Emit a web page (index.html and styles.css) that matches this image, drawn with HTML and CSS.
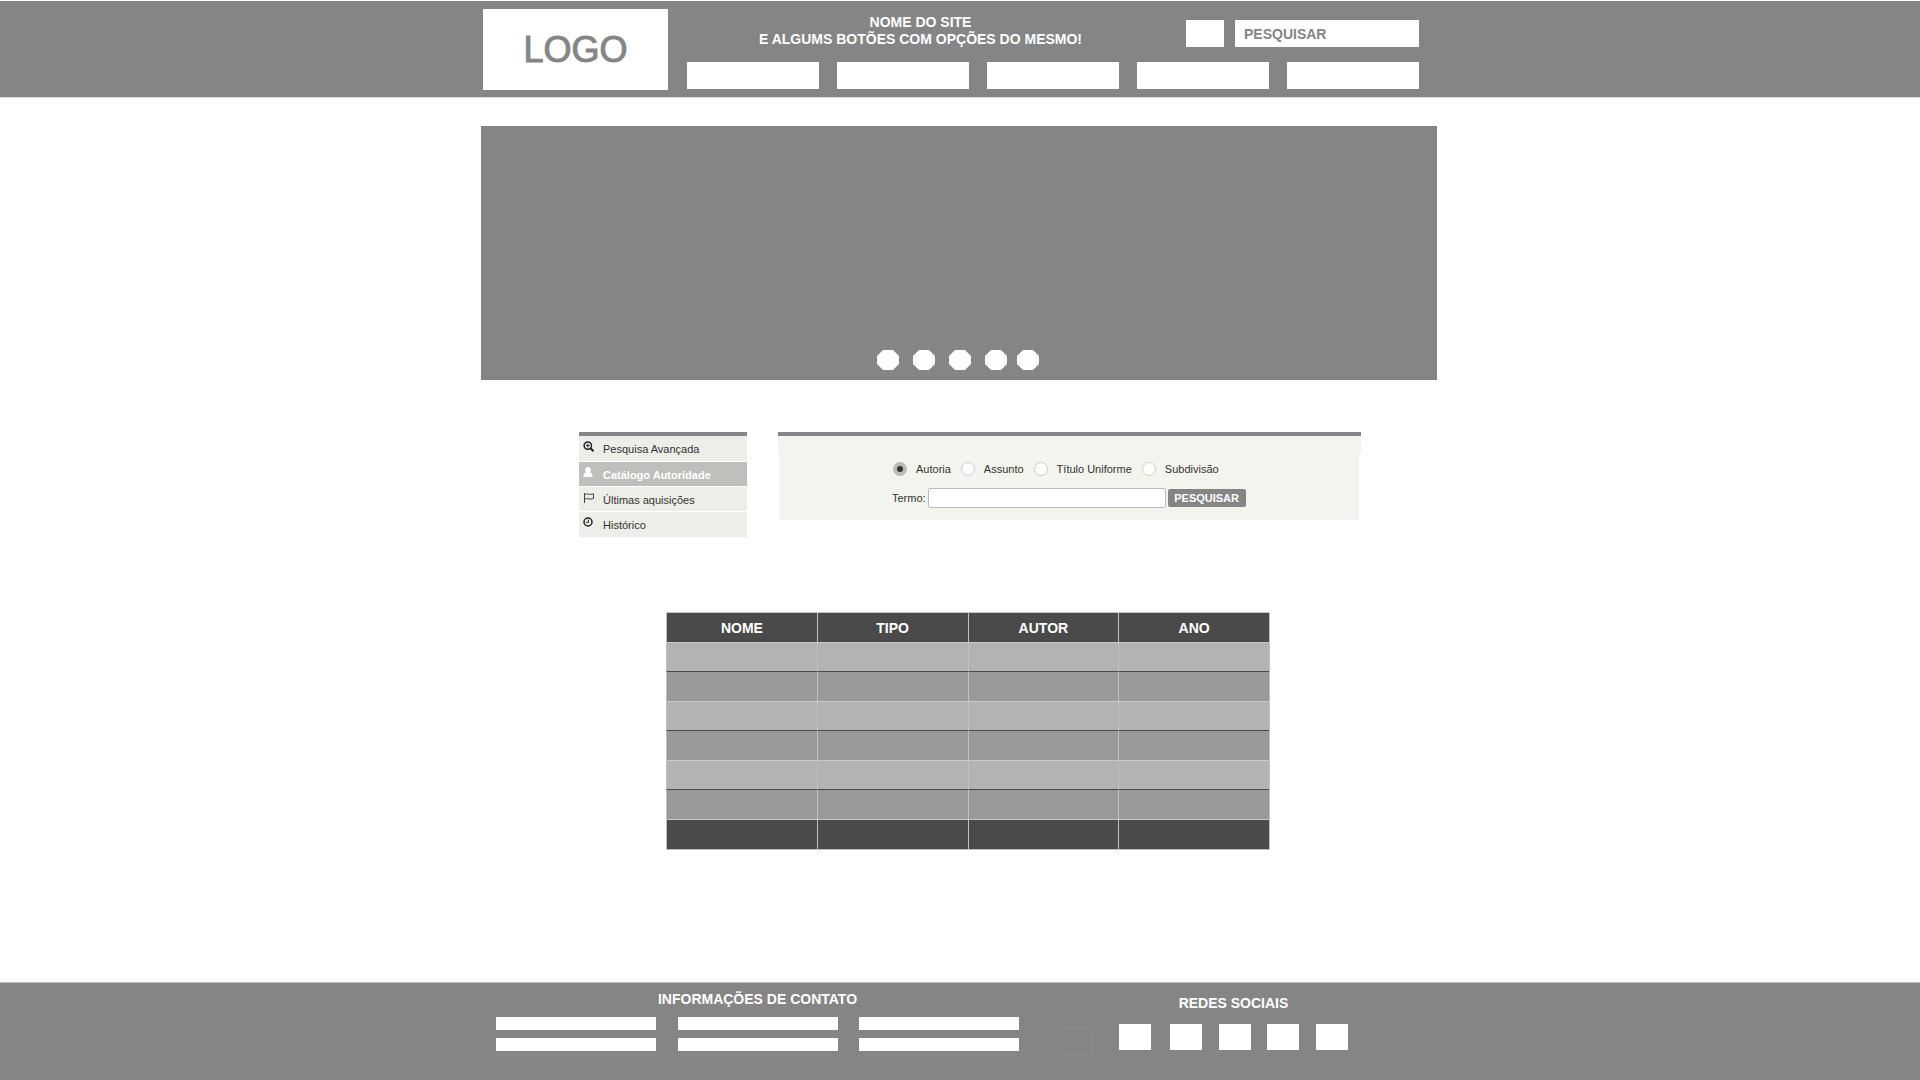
FILE: index.html
```html
<!DOCTYPE html>
<html lang="pt-BR">
<head>
<meta charset="utf-8">
<title>Nome do site</title>
<link rel="stylesheet" href="styles.css">
</head>
<body>
<header class="site-header">
  <div class="container header-inner">
    <a class="logo" href="#">LOGO</a>
    <div class="header-main">
      <div class="header-top">
        <h1 class="site-title">NOME DO SITE<br>E ALGUMS BOTÕES COM OPÇÕES DO MESMO!</h1>
        <form class="site-search">
          <button class="search-button" type="button" aria-label="Buscar"></button>
          <input class="search-input" type="text" placeholder="PESQUISAR" aria-label="Pesquisar">
        </form>
      </div>
      <nav class="main-nav">
        <button type="button" aria-label="Opção 1"></button>
        <button type="button" aria-label="Opção 2"></button>
        <button type="button" aria-label="Opção 3"></button>
        <button type="button" aria-label="Opção 4"></button>
        <button type="button" aria-label="Opção 5"></button>
      </nav>
    </div>
  </div>
</header>

<main class="container">
  <section class="banner">
    <div class="dots">
      <button type="button" aria-label="Slide 1"></button>
      <button type="button" aria-label="Slide 2"></button>
      <button type="button" aria-label="Slide 3"></button>
      <button type="button" aria-label="Slide 4"></button>
      <button type="button" aria-label="Slide 5"></button>
    </div>
  </section>

  <section class="catalog">
    <nav class="side-menu">
      <a href="#">
        <svg viewBox="0 0 12 12"><circle cx="4.800" cy="4.600" r="3.700" fill="none" stroke="#222" stroke-width="1.500"/><path d="M7.500 7.300 10.500 10.300" stroke="#222" stroke-width="2"/><path d="M3 4.600h3.600M4.800 2.800v3.600" stroke="#222"/></svg>
        Pesquisa Avançada</a>
      <a class="active" href="#">
        <svg viewBox="0 0 12 12"><path d="M5 0C6.700 0 7.800 1.200 7.800 2.900c0 1-.3 1.800-.9 2.400C8.700 5.600 9.500 7 9.500 9c0 .7-.4 1-1 1h-7c-.6 0-1-.3-1-1 0-2 .8-3.400 2.600-3.700-.6-.6-.9-1.400-.9-2.400C2.200 1.200 3.300 0 5 0Z" fill="#fff"/></svg>
        Catálogo Autoridade</a>
      <a href="#">
        <svg viewBox="0 0 12 12"><path d="M1.500 1v10M1.500 2.500C4 .8 6 3.500 10.500 1.800v4.700C6 8.200 4 5.500 1.500 7.200" fill="none" stroke="#444"/></svg>
        Últimas aquisições</a>
      <a href="#">
        <svg viewBox="0 0 12 12"><circle cx="5" cy="5" r="4" fill="none" stroke="#222" stroke-width="1.500"/><path d="M5.400 2.600v2.800H3.200" fill="none" stroke="#222"/></svg>
        Histórico</a>
    </nav>

    <form class="search-panel">
      <div class="panel-head"></div>
      <div class="panel-body">
        <div class="options">
          <label><input type="radio" name="campo" checked>Autoria</label>
          <label><input type="radio" name="campo">Assunto</label>
          <label><input type="radio" name="campo">Título Uniforme</label>
          <label><input type="radio" name="campo">Subdivisão</label>
        </div>
        <div class="term">
          <label for="termo">Termo:</label>
          <input id="termo" type="text">
          <button type="button">PESQUISAR</button>
        </div>
      </div>
    </form>
  </section>

  <table class="results">
    <thead><tr><th>NOME</th><th>TIPO</th><th>AUTOR</th><th>ANO</th></tr></thead>
    <tbody>
      <tr><td></td><td></td><td></td><td></td></tr>
      <tr><td></td><td></td><td></td><td></td></tr>
      <tr><td></td><td></td><td></td><td></td></tr>
      <tr><td></td><td></td><td></td><td></td></tr>
      <tr><td></td><td></td><td></td><td></td></tr>
      <tr><td></td><td></td><td></td><td></td></tr>
    </tbody>
    <tfoot><tr><td></td><td></td><td></td><td></td></tr></tfoot>
  </table>
</main>

<footer class="site-footer">
  <div class="container footer-inner">
    <section class="contact">
      <h2>INFORMAÇÕES DE CONTATO</h2>
      <ul><li></li><li></li><li></li><li></li><li></li><li></li></ul>
    </section>
    <div class="ghost"></div>
    <section class="social">
      <h2>REDES SOCIAIS</h2>
      <div class="social-links">
        <a href="#" aria-label="Rede 1"></a>
        <a href="#" aria-label="Rede 2"></a>
        <a href="#" aria-label="Rede 3"></a>
        <a href="#" aria-label="Rede 4"></a>
        <a href="#" aria-label="Rede 5"></a>
      </div>
    </section>
  </div>
</footer>
</body>
</html>
```
FILE: styles.css
```css
* { box-sizing: border-box; }

body {
  margin: 0;
  min-height: 100vh;
  display: flex;
  flex-direction: column;
  background: #fff;
  color: #333;
  font-family: "Liberation Sans", Arial, sans-serif;
  font-size: 11px;
}

button, input { font: inherit; margin: 0; border: 0; padding: 0; border-radius: 0; }
h1, h2 { margin: 0; font-size: 14px; font-weight: 700; line-height: 17px; color: #fff; text-align: center; }

.container { width: 100%; max-width: 958px; margin: 0 auto; padding-right: 2px; }

/* Header */
.site-header { margin-top: 1px; background: #858585; border-bottom: 1px solid #ddd; }
.header-inner { display: flex; gap: 19px; padding: 8px 20px 7px 2px; }
.logo {
  width: 185px; height: 81px;
  display: flex; align-items: center; justify-content: center;
  background: #fff; color: #858585;
  font-size: 36px; text-decoration: none;
  -webkit-text-stroke: 1px #858585;
}
.header-main { flex: 1; display: flex; flex-direction: column; justify-content: space-between; }
.header-top { display: flex; justify-content: space-between; }
.site-title { flex: 1; padding: 5px 32px 0 0; }
.site-search { display: flex; gap: 11px; padding-top: 11px; }
.search-button { width: 38px; height: 27px; background: #fff; }
.search-input { width: 184px; height: 27px; padding: 0 9px; background: #fff; font-size: 14px; font-weight: 700; color: #858585; }
.search-input::placeholder { color: #858585; opacity: 1; }
.main-nav { display: grid; grid-template-columns: repeat(5, 1fr); gap: 18px; padding-bottom: 1px; }
.main-nav button { height: 27px; background: #fff; }

/* Banner */
.banner { margin-top: 28px; height: 254px; display: flex; align-items: flex-end; justify-content: center; padding-bottom: 10px; background: #858585; }
.dots { display: grid; grid-template-columns: repeat(3, 36px) 32px 22px; padding-right: 2px; }
.dots button {
  width: 22px; height: 20px; background: #fff;
  clip-path: polygon(6px 0, 16px 0, 22px 6px, 22px 14px, 16px 20px, 6px 20px, 0 14px, 0 6px);
}

/* Catalogue search */
.catalog { max-width: 782px; margin: 52px 0 0 98px; display: flex; align-items: flex-start; gap: 31px; }
.side-menu { width: 168px; display: flex; flex-direction: column; gap: 1px; border-top: 4px solid #858585; }
.side-menu a { display: flex; gap: 8px; height: 24px; padding: 5px 4px; line-height: 16px; background: #edeee8; color: #333; text-decoration: none; }
.side-menu a:first-child, .side-menu a:last-child { height: 25px; }
.side-menu .active { background: #bfc0bc; color: #fff; font-weight: 700; }
.side-menu svg { width: 12px; height: 12px; flex: none; }
.search-panel { flex: 1; border-top: 4px solid #858585; }
.panel-head { height: 17px; background: #f3f4ee; }
.panel-body { margin: 0 2px 0 1px; background: #f3f4ee; padding: 9px 0 12px 113px; }
.options, .options label, .term { display: flex; align-items: center; }
.options { gap: 10px; padding-left: 1px; }
.options label { gap: 9px; line-height: 14px; }
.options input { appearance: none; width: 14px; height: 14px; border: 1px solid #ccc; border-radius: 50%; background: #fff; }
.options input:checked { border: 4px solid #bbb; background: #333; }
.term { margin-top: 12px; gap: 2px; }
.term input { width: 238px; height: 20px; border: 1px solid #bbb; border-radius: 2px; background: #fff; }
.term button { width: 78px; height: 18px; border-radius: 2px; background: #858585; color: #fff; font-weight: 700; }

/* Results */
.results { width: 604px; margin: 75px 0 0 185px; border-spacing: 0; table-layout: fixed; border-right: 1px solid #c0c0c0; border-bottom: 1px solid #c0c0c0; }
.results th, .results td { height: 30px; padding: 0; border-top: 1px solid #c8c8c8; border-left: 1px solid #c0c0c0; background: #b3b3b3; }
.results th, .results tfoot td { background: #4a4a4a; }
.results th { color: #fff; font-size: 14px; font-weight: 700; }
.results tbody tr:nth-child(even) td { height: 30px; border-top-color: #4a4a4a; background: #999; }
.results tbody tr:nth-child(odd) td { height: 29px; }

/* Footer */
.site-footer { margin-top: auto; background: #858585; border-top: 1px solid #c0c0c0; }
.footer-inner { display: flex; padding: 8px 0 24px 15px; }
.contact { width: 523px; }
.contact ul { list-style: none; margin: 9px 0 0; padding: 0; display: grid; grid-template-columns: repeat(3, 160px); justify-content: space-between; row-gap: 8px; }
.contact li { height: 13px; background: #fff; }
.ghost { width: 34px; height: 28px; margin: 37px 27px 0 39px; border: 1px solid #888; }
.social { width: 229px; padding-top: 4px; }
.social-links { display: grid; grid-template-columns: 51px 49px 48px 49px 32px; margin-top: 12px; }
.social-links a { width: 32px; height: 26px; background: #fff; }
```
